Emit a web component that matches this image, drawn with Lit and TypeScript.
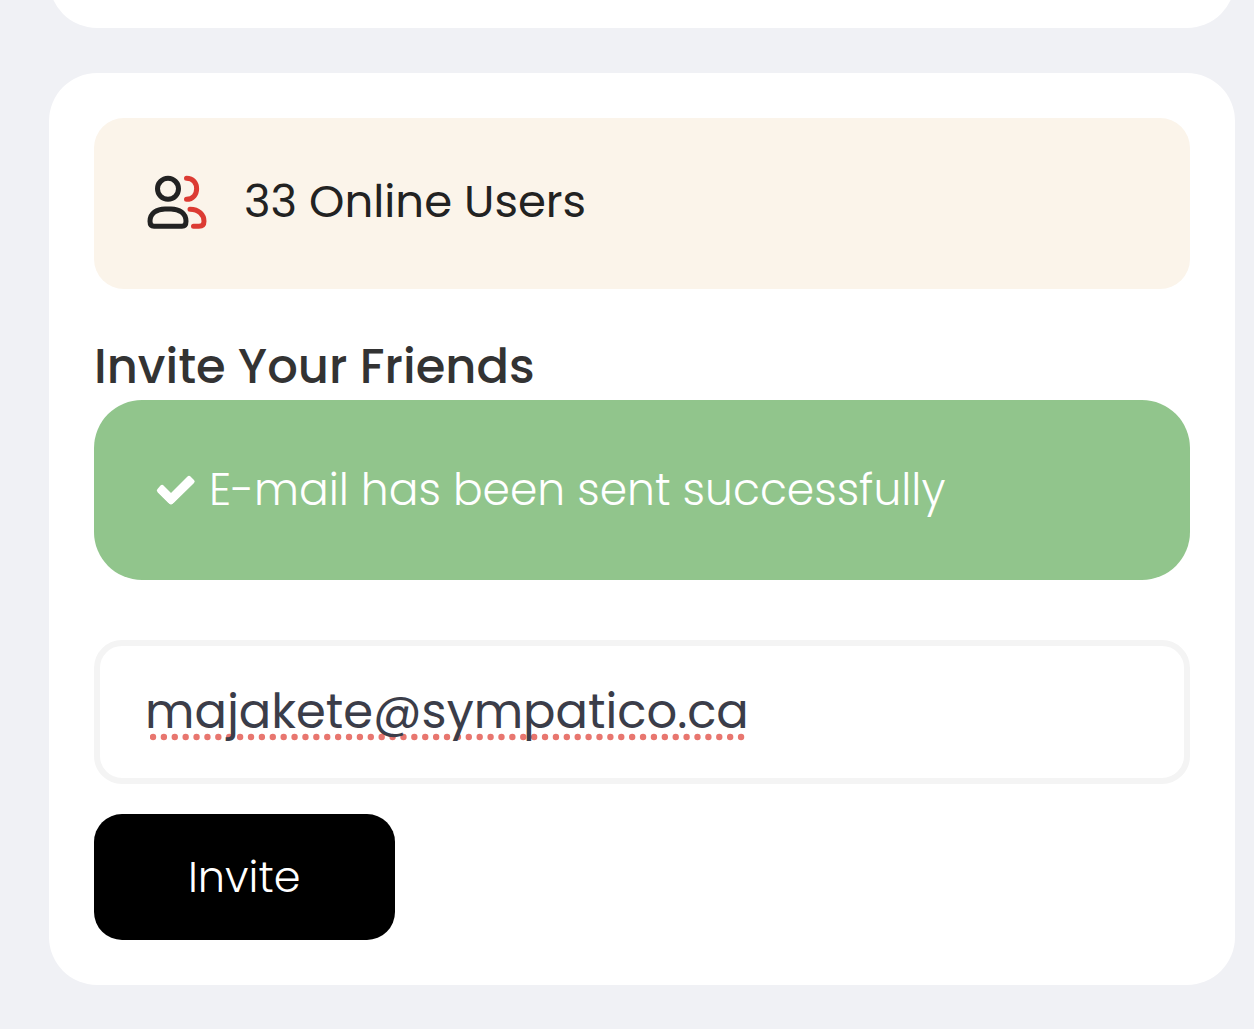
import { LitElement, html, css } from "lit";
import { customElement, state } from "lit/decorators.js";

@customElement("app-root")
export class AppRoot extends LitElement {
  static styles = css`
    :host {
      display: block;
      min-height: 100vh;
      box-sizing: border-box;
      padding: 0 19px 44px 49px;
      background: #f0f1f5;
      font-family: Poppins, Inter, "Open Sans", sans-serif;
      color: #222;
    }
    .card {
      box-sizing: border-box;
      padding: 45px;
      border-radius: 48px;
      background: #fff;
    }
    .previous {
      height: 28px;
      padding: 0;
      margin-bottom: 45px;
      border-radius: 0;
      overflow: hidden;
      display: flex;
      align-items: flex-end;
      background: none;
    }
    .previous::after {
      content: "";
      flex: 1;
      height: 96px;
      border-radius: 48px;
      background: #fff;
    }
    .online {
      display: flex;
      align-items: center;
      gap: 36px;
      padding: 51px 52px 54px;
      border-radius: 30px;
      background: #fbf4ea;
      font-size: 45px;
      line-height: 66px;
    }
    .users {
      flex: none;
      width: 62px;
      height: 56px;
    }
    .title {
      margin: 44px 0 0;
      color: #333;
      font-size: 48px;
      font-weight: 500;
      line-height: 67px;
    }
    .notice {
      display: flex;
      align-items: center;
      gap: 13px;
      padding: 57px 62px;
      border-radius: 48px;
      background: #91c58c;
      color: #fff;
      font-size: 44px;
      font-weight: 300;
      line-height: 66px;
    }
    .check {
      flex: none;
      width: 40px;
      height: 32px;
    }
    .field {
      position: relative;
      margin: 60px 0 30px;
    }
    .email {
      position: relative;
      display: block;
      box-sizing: border-box;
      width: 100%;
      height: 144px;
      padding: 0 45px;
      border: 6px solid #f4f4f4;
      border-radius: 28px;
      background: transparent;
      color: #3b3d49;
      font: inherit;
      font-size: 48px;
      outline: none;
    }
    .spelling {
      position: absolute;
      left: 56px;
      top: 93px;
      width: 600px;
      height: 8px;
    }
    .invite {
      display: block;
      padding: 30px 94px;
      border: 0;
      border-radius: 28px;
      background: #000;
      color: #fff;
      font: inherit;
      font-size: 43px;
      font-weight: 300;
      line-height: 66px;
    }
  `;

  @state() private email = "majakete@sympatico.ca";

  render() {
    return html`
      <div class="card previous"></div>
      <main class="card">
        <div class="online">
          <svg class="users" viewBox="0 1 62 56" fill="none" stroke-width="5" stroke-linecap="round" stroke-linejoin="round" aria-hidden="true">
            <g stroke="#222">
              <circle cx="22" cy="15.800" r="10.500" />
              <path d="M8 53.300H36Q40 53.300 40 48.300C40 40 33 36 25 36H19C11 36 4 40 4 48.300Q4 53.300 8 53.300Z" />
            </g>
            <g stroke="#dc3b33">
              <path d="M40.500 5.200C54 5.200 54 26.300 40.500 26.300" />
              <path d="M44 36.300C53 36.300 58 42 58 48.300Q58 53.300 53 53.300H47.500" />
            </g>
          </svg>
          <span>33 Online Users</span>
        </div>
        <h2 class="title">Invite Your Friends</h2>
        <div class="notice" role="status">
          <svg class="check" viewBox="0 0 40 32" aria-hidden="true">
            <path d="M4.500 15.500L15 26L34.500 6.500" fill="none" stroke="#fff" stroke-width="8" stroke-linejoin="round" />
            <path d="M7 11L15 19L31.500 2.500Q33 1 34.500 2.500L38 6Q39.500 7.500 38 9L16.500 29.800Q15 31.300 13.500 29.800L1.500 18Q0 16.500 1.500 15L4.500 11.500Q5.800 10.200 7 11Z" fill="#fff" />
          </svg>
          <span>E-mail has been sent successfully</span>
        </div>
        <div class="field">
          <svg class="spelling" viewBox="0 0 600 8" aria-hidden="true">
            <path d="M3 4H592" stroke="#e8766f" stroke-width="6.400" stroke-linecap="round" stroke-dasharray="0 10.890" />
          </svg>
          <input
            class="email"
            type="email"
            aria-label="Friend's e-mail"
            spellcheck="false"
            .value=${this.email}
            @input=${(e: Event) => (this.email = (e.target as HTMLInputElement).value)}
          />
        </div>
        <button class="invite" type="button">Invite</button>
      </main>
    `;
  }
}
